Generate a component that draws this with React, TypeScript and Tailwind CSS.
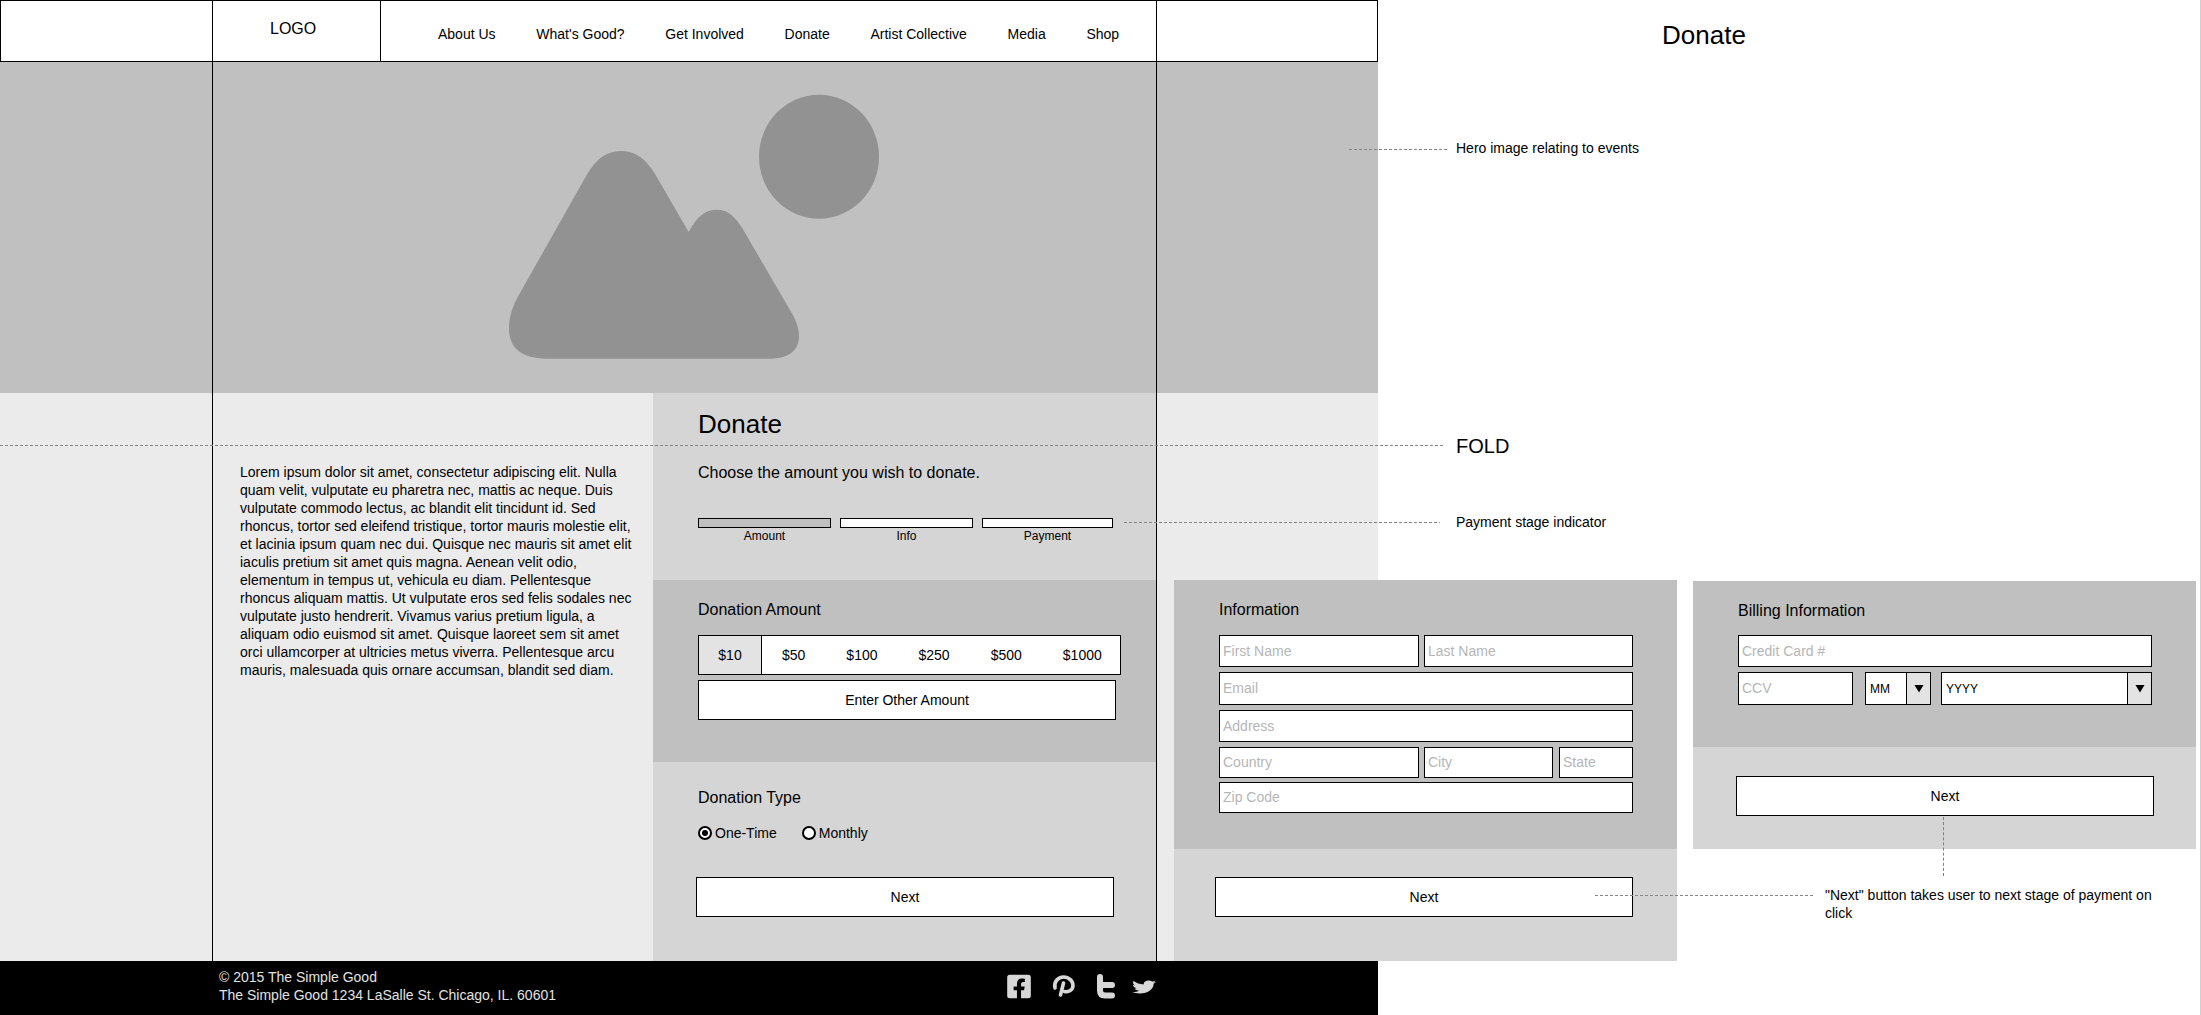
import React from 'react';
import { FaFacebookSquare, FaTwitter } from 'react-icons/fa';

const navItems = ['About Us', "What's Good?", 'Get Involved', 'Donate', 'Artist Collective', 'Media', 'Shop'];
const amounts = ['$50', '$100', '$250', '$500', '$1000'];

function Field({ placeholder, className }: { placeholder: string; className: string }) {
  return (
    <input
      readOnly
      placeholder={placeholder}
      className={`block min-w-0 border border-black bg-white px-[3px] pb-[1px] text-[14px] outline-none placeholder:text-[#b6b6b6] ${className}`}
    />
  );
}

function Select({ label, className }: { label: string; className: string }) {
  return (
    <div className={`flex h-[33px] border border-black bg-white text-[12px] ${className}`}>
      <span className="flex flex-1 items-center pl-[4px]">{label}</span>
      <span className="flex w-[24px] items-center justify-center border-l border-black bg-[#e3e3e3]">
        <svg width="10" height="9" viewBox="0 0 10 9">
          <path d="M0.5 1h9L5 8.5z" fill="#000" />
        </svg>
      </span>
    </div>
  );
}

function NextButton({ className }: { className: string }) {
  return (
    <button className={`block h-[40px] border border-black bg-white text-center text-[14px] ${className}`}>Next</button>
  );
}

function Stage({ label, active, className }: { label: string; active?: boolean; className: string }) {
  return (
    <div className={className}>
      <div className={`h-[10px] border border-black ${active ? 'bg-[#c0c0c0]' : 'bg-white'}`} />
      <div className="mt-[1px] text-center text-[12px] leading-[14px]">{label}</div>
    </div>
  );
}

function Radio({ label, checked }: { label: string; checked?: boolean }) {
  return (
    <div className="flex items-center gap-[3px] text-[14px]">
      <span className="flex h-[14px] w-[14px] items-center justify-center rounded-full border-2 border-black bg-white">
        {checked && <span className="h-[6px] w-[6px] rounded-full bg-black" />}
      </span>
      {label}
    </div>
  );
}

function Dash({ className }: { className: string }) {
  return (
    <div
      className={`absolute h-px bg-[repeating-linear-gradient(90deg,#858585_0,#858585_3px,transparent_3px,transparent_5px)] ${className}`}
    />
  );
}

export default function App() {
  return (
    <div className="relative h-[1015px] w-[2201px] overflow-hidden bg-white font-['Liberation_Sans',Arial,sans-serif] text-black">
      {/* Header + hero, page notes on the right */}
      <div className="flex h-[393px]">
        <div className="flex w-[1378px] flex-col">
          <header className="flex h-[62px] border border-black">
            <div className="w-[211px]" />
            <div className="w-[169px] border-x border-black pt-[18px] pl-[57px] text-[16px] leading-[20px]">LOGO</div>
            <nav className="flex w-[775px] gap-[40.7px] pt-[24px] pl-[57px] text-[14px] leading-[18px]">
              {navItems.map((item) => (
                <span key={item}>{item}</span>
              ))}
            </nav>
            <div className="flex-1 border-l border-black" />
          </header>
          <div className="flex-1 bg-[#c0c0c0] pl-[212px]">
            <div className="h-full w-[945px] border-x border-black pt-[18px] pl-[277px]">
              <svg width="400" height="300" viewBox="0 0 1200 900" className="block">
                <path
                  d="M170 836C90 836 57 800 57 745C57 700 75 665 95 630L290 285C320 235 350 213 395 213C440 213 470 240 497 285L596 456C620 410 645 389 680 389C715 389 735 410 757 445L900 690C915 715 927 740 927 770C927 815 890 836 835 836Z"
                  fill="#929292"
                />
                <ellipse cx="987" cy="230" rx="180" ry="186" fill="#929292" />
              </svg>
            </div>
          </div>
        </div>
        <div className="flex-1">
          <h1 className="pt-[20px] pl-[284px] text-[26px] leading-[30px]">Donate</h1>
          <p className="pt-[89px] pl-[78px] text-[14px] leading-[18px]">Hero image relating to events</p>
        </div>
      </div>

      {/* Main content */}
      <div className="flex h-[568px]">
        <div className="w-[212px] bg-[#ebebeb]" />
        <div className="w-[441px] border-l border-black bg-[#ebebeb] pt-[70px] pl-[27px]">
          <p className="w-[396px] text-[14px] leading-[18px]">
            Lorem ipsum dolor sit amet, consectetur adipiscing elit. Nulla quam velit, vulputate eu pharetra nec, mattis
            ac neque. Duis vulputate commodo lectus, ac blandit elit tincidunt id. Sed rhoncus, tortor sed eleifend
            tristique, tortor mauris molestie elit, et lacinia ipsum quam nec dui. Quisque nec mauris sit amet elit
            iaculis pretium sit amet quis magna. Aenean velit odio, elementum in tempus ut, vehicula eu diam.
            Pellentesque rhoncus aliquam mattis. Ut vulputate eros sed felis sodales nec vulputate justo hendrerit.
            Vivamus varius pretium ligula, a aliquam odio euismod sit amet. Quisque laoreet sem sit amet orci
            ullamcorper at ultricies metus viverra. Pellentesque arcu mauris, malesuada quis ornare accumsan, blandit
            sed diam.
          </p>
        </div>
        <div className="flex w-[504px] flex-col border-r border-black bg-[#d5d5d5]">
          <div className="h-[187px] pt-[16px] pl-[45px]">
            <h2 className="text-[26px] leading-[30px]">Donate</h2>
            <p className="mt-[25px] text-[16px] leading-[18px]">Choose the amount you wish to donate.</p>
            <div className="mt-[36px] flex gap-[9px]">
              <Stage label="Amount" active className="w-[133px]" />
              <Stage label="Info" className="w-[133px]" />
              <Stage label="Payment" className="w-[131px]" />
            </div>
          </div>
          <div className="h-[182px] bg-[#c0c0c0] pt-[21px] pl-[45px]">
            <h3 className="text-[16px] leading-[18px]">Donation Amount</h3>
            <div className="mt-[16px] flex h-[40px] w-[423px] items-center border border-black bg-white text-[14px]">
              <span className="flex h-full w-[63px] items-center justify-center border-r border-black bg-[#e3e3e3]">
                $10
              </span>
              <div className="flex gap-[41px] pl-[20px]">
                {amounts.map((a) => (
                  <span key={a}>{a}</span>
                ))}
              </div>
            </div>
            <button className="mt-[5px] block h-[40px] w-[418px] border border-black bg-white text-center text-[14px]">
              Enter Other Amount
            </button>
          </div>
          <div className="flex-1 pt-[27px] pl-[45px]">
            <h3 className="text-[16px] leading-[18px]">Donation Type</h3>
            <div className="mt-[17px] flex h-[18px] gap-[25px]">
              <Radio label="One-Time" checked />
              <Radio label="Monthly" />
            </div>
            <NextButton className="mt-[35px] -ml-[2px] w-[418px]" />
          </div>
        </div>
        <div className="w-[17px] bg-[#ebebeb]" />
        <div className="flex flex-1 flex-col">
          <div className="flex h-[187px]">
            <div className="w-[204px] bg-[#ebebeb]" />
            <div className="pl-[78px] text-[14px] leading-[18px]">
              <p className="pt-[44px] text-[20px] leading-[18px]">FOLD</p>
              <p className="pt-[58px]">Payment stage indicator</p>
            </div>
          </div>
          <div className="flex flex-1 gap-[16px]">
            <div className="flex w-[503px] flex-col bg-[#d5d5d5]">
              <div className="h-[269px] bg-[#c0c0c0] pt-[21px] pl-[45px]">
                <h3 className="text-[16px] leading-[18px]">Information</h3>
                <div className="mt-[16px] flex w-[414px] flex-col">
                  <div className="flex gap-[5px]">
                    <Field placeholder="First Name" className="h-[32px] w-[200px]" />
                    <Field placeholder="Last Name" className="h-[32px] flex-1" />
                  </div>
                  <Field placeholder="Email" className="mt-[5px] h-[33px] w-full" />
                  <Field placeholder="Address" className="mt-[5px] h-[32px] w-full" />
                  <div className="mt-[5px] flex">
                    <Field placeholder="Country" className="h-[31px] w-[200px]" />
                    <Field placeholder="City" className="ml-[5px] h-[31px] w-[129px]" />
                    <Field placeholder="State" className="ml-[6px] h-[31px] w-[74px]" />
                  </div>
                  <Field placeholder="Zip Code" className="mt-[4px] h-[31px] w-full" />
                </div>
              </div>
              <div className="flex-1 pt-[28px] pl-[41px]">
                <NextButton className="w-[418px]" />
              </div>
            </div>
            <div className="w-[503px]">
              <div className="mt-[1px] bg-[#d5d5d5]">
                <div className="h-[166px] bg-[#c0c0c0] pt-[21px] pl-[45px]">
                  <h3 className="text-[16px] leading-[18px]">Billing Information</h3>
                  <Field placeholder="Credit Card #" className="mt-[15px] h-[32px] w-[414px]" />
                  <div className="mt-[5px] flex w-[414px]">
                    <Field placeholder="CCV" className="h-[33px] w-[115px]" />
                    <Select label="MM" className="ml-[12px] w-[66px]" />
                    <Select label="YYYY" className="ml-[10px] flex-1" />
                  </div>
                </div>
                <div className="h-[102px] pt-[29px] pl-[43px]">
                  <NextButton className="w-[418px]" />
                </div>
              </div>
              <p className="mt-[37px] w-[480px] pl-[132px] text-[14px] leading-[18px]">
                "Next" button takes user to next stage of payment on click
              </p>
            </div>
          </div>
        </div>
      </div>

      {/* Footer */}
      <footer className="flex h-[54px] w-[1378px] bg-black pt-[7px] pl-[219px] text-[14px] leading-[18px] text-[#e2e2e2]">
        <div className="w-[788px]">
          <p>© 2015 The Simple Good</p>
          <p>The Simple Good 1234 LaSalle St. Chicago, IL. 60601</p>
        </div>
        <div className="flex items-start pt-[7px] text-[#d8d8d8]">
          <FaFacebookSquare className="-mt-[2px] h-[27px] w-[24px]" />
          <svg width="24" height="24" viewBox="0 0 24 24" className="ml-[20px]">
            <path
              d="M4 13C2.5 7 7 2 12.5 2C18 2 22 6 22 10.5C22 15 17.5 17.5 13.5 16.5M12.5 8L9.5 20"
              fill="none"
              stroke="currentColor"
              strokeWidth="3.6"
              strokeLinecap="round"
            />
          </svg>
          <svg width="20" height="25" viewBox="0 0 20 25" className="-mt-[1px] ml-[21px]">
            <path d="M4 3V16.5Q4 21.5 9 21.5H16M4 11H16" fill="none" stroke="currentColor" strokeWidth="6" strokeLinecap="round" />
          </svg>
          <FaTwitter preserveAspectRatio="none" className="mt-[4px] ml-[16px] h-[16px] w-[24px]" />
        </div>
      </footer>

      {/* Annotation leader lines */}
      <Dash className="top-[445px] left-0 w-[1444px]" />
      <Dash className="top-[149px] left-[1349px] w-[99px]" />
      <Dash className="top-[522px] left-[1124px] w-[316px]" />
      <Dash className="top-[895px] left-[1595px] w-[220px]" />
      <div className="absolute top-[817px] left-[1943px] h-[59px] border-l border-dashed border-[#808080]" />
      <div className="absolute top-0 right-0 h-full w-px bg-[#d0d0d0]" />
    </div>
  );
}
